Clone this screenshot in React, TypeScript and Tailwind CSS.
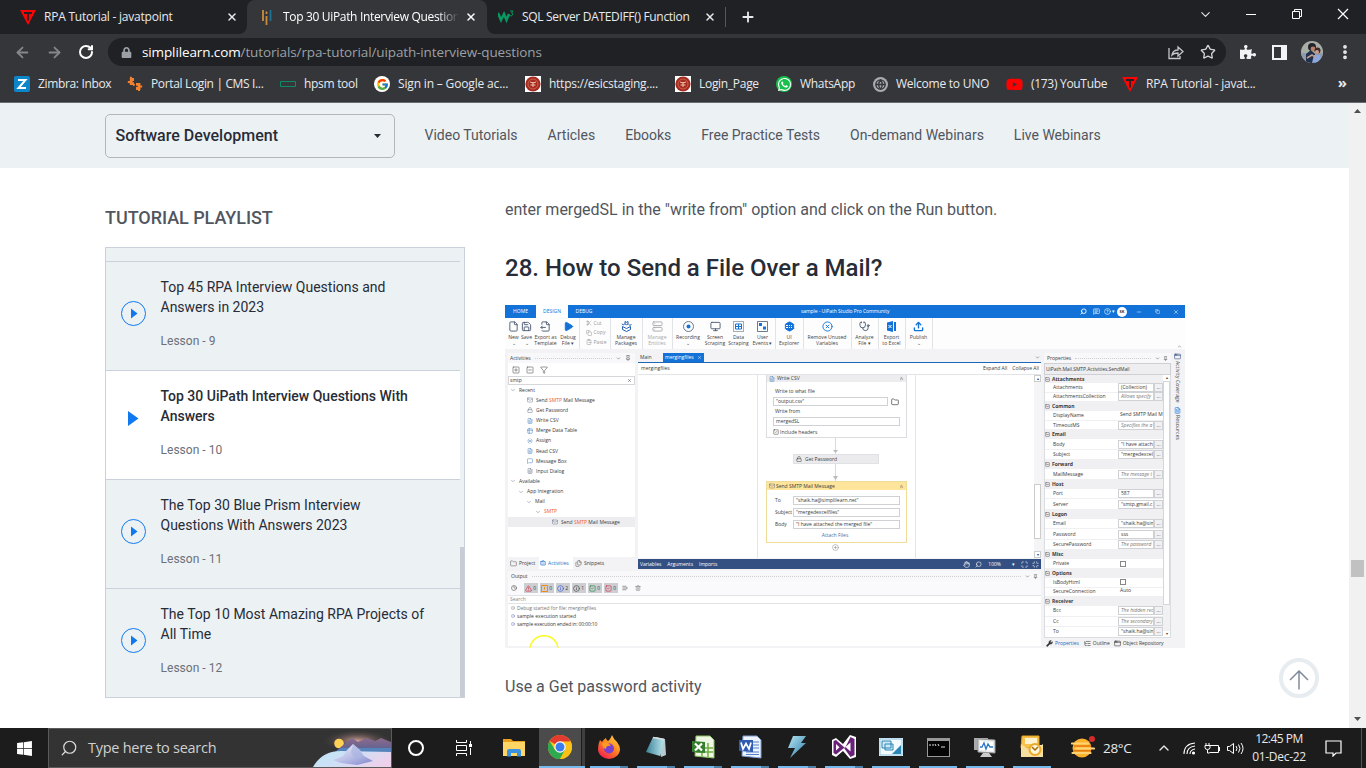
import React from "react";
import {
  ArrowLeft, ArrowRight, RotateCw, X, Plus, Star, ChevronDown, ChevronUp, ChevronsUp, Minus, MoreVertical, Search,
  File, FileOutput, FileText, Save, Play, Scissors, Copy, ClipboardPaste, Package, Server, CircleDot, Monitor, Table2,
  PanelsTopLeft, Hexagon, CircleX, Stethoscope, Upload, SquarePlus, SquareMinus, Filter, Mail, Lock, MessageSquare, Folder,
  Briefcase, Files, Clock, TriangleAlert, Info, SquareCheck, Trash2, ListX, Pin, CirclePlus, Hand, Maximize,
  Minimize, Wrench, ListTree, AppWindow, CircleHelp, MessageSquareText, Globe, Variable,
} from "lucide-react";
import { FcGoogle } from "react-icons/fc";
import { FaWhatsapp, FaPuzzlePiece, FaLock, FaYoutube, FaWindows } from "react-icons/fa";

const ui = "font-['Open_Sans','Noto_Sans',sans-serif]";
const roboto = "font-['Roboto',sans-serif]";

/* ---------- Browser ---------- */

function JtpIcon() {
  return (
    <svg className="size-4 shrink-0" viewBox="0 0 16 16">
      <path d="M0 1h16L8 16z" fill="#f80505" />
      <path d="M4 4h8M8 4v7.500" stroke="#202124" strokeWidth="1.800" fill="none" />
    </svg>
  );
}

function Emblem() {
  return (
    <svg className="size-4 shrink-0" viewBox="0 0 16 16">
      <rect width="16" height="16" fill="#fff" />
      <circle cx="8" cy="8" r="7.600" fill="#a8291e" />
      <circle cx="8" cy="8" r="5" fill="none" stroke="#c9745f" strokeWidth=".8" />
      <path d="M5 6l3 1 3-1M8 6v5M5.500 9h5" stroke="#e9c3ae" strokeWidth="1" fill="none" />
    </svg>
  );
}

function TabStrip() {
  return (
    <div className="flex h-[34px] bg-[#202124] text-[12px] text-[#e8eaed]">
      <div className="flex w-[247px] items-center pl-5">
        <JtpIcon />
        <span className="ml-2 w-[175px] whitespace-nowrap tracking-[-0.23px]">RPA Tutorial - javatpoint</span>
        <X className="ml-[7px] size-3" strokeWidth={3} />
      </div>
      <div className="relative flex w-[240px] items-center rounded-t-lg bg-[#35363a] pl-3 text-white">
        <svg className="absolute -left-2 bottom-0 size-2" viewBox="0 0 8 8"><path d="M8 0v8H0a8 8 0 0 0 8-8" fill="#35363a" /></svg>
        <svg className="absolute -right-2 bottom-0 size-2" viewBox="0 0 8 8"><path d="M0 0v8h8a8 8 0 0 1-8-8" fill="#35363a" /></svg>
        <svg className="size-4 shrink-0" viewBox="0 0 16 16" strokeWidth="1.800">
          <path d="M4 1v11M7.500 7v9M7.500 2.500v2.500" stroke="#c98d3c" /><path d="M11.500 1v11" stroke="#1f7396" />
        </svg>
        <span className="ml-2 w-[176px] whitespace-nowrap tracking-[-0.33px] [mask-image:linear-gradient(90deg,#000_155px,transparent)]">
          Top 30 UiPath Interview Question
        </span>
        <X className="ml-[6px] size-3" strokeWidth={3} />
      </div>
      <div className="flex items-center pl-[11px]">
        <svg className="size-4" viewBox="0 0 16 16" fill="none" stroke="#089960" strokeWidth="2.500">
          <path d="M0 4l3 7 3-6 2.500 6L11 5" /><path d="M12 2h3l-1.500 2q2 .5 1 2t-3 .5" strokeWidth="1" />
        </svg>
        <span className="ml-2 w-[183px] whitespace-nowrap tracking-[-0.32px]">SQL Server DATEDIFF() Function</span>
        <X className="-ml-px size-3" strokeWidth={3} />
        <span className="ml-[9px] h-5 w-px bg-[#55575b]" />
        <Plus className="ml-[14px] size-4" strokeWidth={2.700} />
      </div>
      <div className="ml-auto grid grid-cols-[repeat(4,46px)] place-items-center pb-[6px]">
        <ChevronDown className="size-[15px]" strokeWidth={1.700} />
        <span className="h-px w-[10px] bg-white" />
        <svg className="size-[12px]" viewBox="0 0 12 12" fill="none" stroke="#fff"><path d="M1.500 3.500h7v7h-7zM3.500 3.500v-2h7v7h-2" /></svg>
        <svg className="size-[12px]" viewBox="0 0 12 12" stroke="#fff" strokeWidth="1.200"><path d="M1 1l10 10M11 1L1 11" /></svg>
      </div>
    </div>
  );
}

function Avatar() {
  return (
    <svg className="size-[22px]" viewBox="0 0 22 22">
      <defs><clipPath id="av"><circle cx="11" cy="11" r="11" /></clipPath></defs>
      <g clipPath="url(#av)">
        <rect width="22" height="22" fill="#a9aea6" /><rect y="12" width="22" height="10" fill="#8f99ad" />
        <path d="M5 22V13l5-4 4 4v9z" fill="#20314b" /><circle cx="11" cy="6" r="4" fill="#24252b" /><circle cx="12" cy="8" r="2.400" fill="#b9826a" />
        <circle cx="16.500" cy="9.500" r="3" fill="#3a2b2b" /><circle cx="16" cy="11" r="2" fill="#cf9c86" /><path d="M11 22l2-8h6l2 8z" fill="#8ba8dc" />
        <path d="M6 17l5-3 4 3" stroke="#c99a86" strokeWidth="1.500" fill="none" />
      </g>
    </svg>
  );
}

function Toolbar() {
  return (
    <div className="flex h-[36px] items-center bg-[#35363a] pr-[15px] pl-[14px]">
      <ArrowLeft className="size-[17px] text-[#85878a]" strokeWidth={2.500} />
      <ArrowRight className="ml-[15px] size-[17px] text-[#85878a]" strokeWidth={2.500} />
      <RotateCw className="ml-[15px] size-4 text-white" strokeWidth={3} />
      <div className="ml-[14px] flex h-7 w-[1118px] items-center rounded-full bg-[#202124] pl-[13px]">
        <FaLock className="size-[11px] text-[#9aa0a6]" />
        <span className="ml-[10px] text-[13.500px] tracking-[-0.12px] whitespace-nowrap text-[#9aa0a6]">
          <span className="text-white">simplilearn.com</span>/tutorials/rpa-tutorial/uipath-interview-questions
        </span>
        <svg className="ml-auto size-4" viewBox="0 0 16 16" fill="none" stroke="#c4c7cb" strokeWidth="1.300">
          <path d="M1 4v10.500h11V12M4 11q1-5 6-5V3l5 4.500L10 12V9q-4 0-6 2z" />
        </svg>
        <Star className="mr-[10px] ml-[16px] size-4 text-[#d2d4d7]" />
      </div>
      <FaPuzzlePiece className="ml-[14px] size-[16px] text-[#f1f3f4]" />
      <svg className="ml-[16px] size-[15px]" viewBox="0 0 15 15"><path d="M1 1h13v13H1z" fill="none" stroke="#f1f3f4" strokeWidth="2" /><path d="M9 1h5v13H9z" fill="#f1f3f4" /></svg>
      <span className="ml-[14px]"><Avatar /></span>
      <MoreVertical className="ml-auto size-[18px] -mr-[3px] text-[#f1f3f4]" strokeWidth={3} />
    </div>
  );
}

const bookmarks = [
  { t: "Zimbra: Inbox", w: "w-[113px]", k: "tracking-[-0.35px]", i: <svg className="size-4" viewBox="0 0 16 16"><rect width="16" height="16" rx="2" fill="#0a86c9" /><path d="M4 4h7.500L4.500 12H12" stroke="#fff" strokeWidth="2" fill="none" /></svg> },
  { t: "Portal Login | CMS I...", w: "w-[153px]", k: "tracking-[-0.35px]", i: <svg className="size-4" viewBox="0 0 16 16" fill="none" stroke="#f5802d"><path d="M7 3.500H4.200v4.200H7M9 8.300h3v4.200H9" strokeWidth="2.800" /><path d="M4 .8v3M.8 6h3M12 15v-3M15.200 10.500h-3M6 8l1.500 1.500" strokeWidth="2" /></svg> },
  { t: "hpsm tool", w: "w-[94px]", k: "tracking-[-0.3px]", i: <svg className="size-4" viewBox="0 0 16 16"><path d="M.5 5.500h15v5H.5z" stroke="#0c8b64" fill="none" /></svg> },
  { t: "Sign in – Google ac...", w: "w-[151px]", k: "tracking-[-0.16px]", i: <span className="grid size-4 place-items-center rounded-full bg-white"><FcGoogle className="size-[13px]" /></span> },
  { t: "https://esicstaging....", w: "w-[150px]", k: "tracking-[-0.26px]", i: <Emblem /> },
  { t: "Login_Page", w: "w-[101px]", k: "tracking-[-0.3px]", i: <Emblem /> },
  { t: "WhatsApp", w: "w-[97px]", k: "tracking-[-0.3px]", i: <span className="grid size-4 place-items-center rounded-full bg-[#16c04a]"><FaWhatsapp className="size-[15px] text-white" /></span> },
  { t: "Welcome to UNO", w: "w-[133px]", k: "tracking-[-0.25px]", i: <span className="grid size-[15px] place-items-center rounded-full bg-[#a8abb0]"><Globe className="size-[11px] text-[#35363a]" strokeWidth={3} /></span> },
  { t: "(173) YouTube", w: "w-[116px]", k: "tracking-[-0.3px]", i: <FaYoutube className="size-[17px] text-[#f00]" /> },
  { t: "RPA Tutorial - javat...", w: "w-[150px]", k: "tracking-[-0.22px]", i: <JtpIcon /> },
];

function Bookmarks() {
  return (
    <div className="flex h-[33px] items-center border-b border-[#6a6b6e] bg-[#35363a] pb-1 pl-[14px] text-[12px] text-[#e8eaed]">
      {bookmarks.map((b) => (
        <div key={b.t} className={`flex shrink-0 items-center gap-2 whitespace-nowrap ${b.w}`}>
          {b.i}
          <span className={b.k}>{b.t}</span>
        </div>
      ))}
      <span className="mr-[19px] ml-auto pb-[3px] text-[15px] font-bold">»</span>
    </div>
  );
}

/* ---------- Site ---------- */

function SiteNav() {
  return (
    <div className="flex h-[65px] items-center bg-[#ecf1f4] pl-[105px]">
      <div className="flex h-11 w-[290px] items-center justify-between rounded-[5px] border border-[#b3b5b9] pr-[13px] pl-[9.500px] text-[16px] font-medium text-[#272c37]">
        <span>Software Development</span>
        <svg className="h-1 w-[7px]" viewBox="0 0 7 4"><path d="M0 0h7L3.500 4z" fill="#272c37" /></svg>
      </div>
      <nav className="ml-[29.500px] flex gap-[30px] text-[14px] text-[#51565e]">
        {["Video Tutorials", "Articles", "Ebooks", "Free Practice Tests", "On-demand Webinars", "Live Webinars"].map((l) => <span key={l}>{l}</span>)}
      </nav>
    </div>
  );
}

const lessons = [
  { a: "Top 45 RPA Interview Questions and", b: "Answers in 2023", n: 9 },
  { a: "Top 30 UiPath Interview Questions With", b: "Answers", n: 10, on: true },
  { a: "The Top 30 Blue Prism Interview", b: "Questions With Answers 2023", n: 11 },
  { a: "The Top 10 Most Amazing RPA Projects of", b: "All Time", n: 12 },
];

function Playlist() {
  return (
    <aside className="w-[360px]">
      <h2 className="mt-[39px] text-[18px] leading-[22px] font-medium tracking-[-0.05px] text-[#51565e]">TUTORIAL PLAYLIST</h2>
      <div className="mt-[18px] flex h-[451px] border border-[#ccd0da] bg-[#ecf1f4]">
        <div className="w-[354px] pt-[13px]">
          {lessons.map((l) => (
            <div key={l.n} className={`flex h-[109px] items-start border-t border-[#ccd0da] pl-[15px] ${l.on ? "bg-white" : ""}`}>
              <div className="mt-[39px] w-[39.500px]">
                {l.on ? (
                  <svg className="mt-[1px] ml-[7px] h-[15px] w-[11px]" viewBox="0 0 11 15"><path d="M0 0l10.500 7.500L0 15z" fill="#1179ef" /></svg>
                ) : (
                  <svg className="size-[25px]" viewBox="0 0 25 25"><circle cx="12.500" cy="12.500" r="12" fill="none" stroke="#1179ef" /><path d="M10 7.500l6.500 5-6.500 5z" fill="#1179ef" /></svg>
                )}
              </div>
              <div className={`pt-[15px] text-[14px] leading-5 whitespace-nowrap text-[#272c37] ${l.on ? "font-medium" : "font-normal"}`}>
                <p>{l.a}</p>
                <p>{l.b}</p>
                <p className="mt-[14px] text-[12px] font-normal tracking-[0.03px] text-[#6c7078]">Lesson - {l.n}</p>
              </div>
            </div>
          ))}
        </div>
        <span className="ml-auto h-[150px] w-1 self-end bg-[#c8ccd4]" />
      </div>
    </aside>
  );
}

/* ---------- Studio picture ---------- */

function Tool({ i, a, b, w, dim }: { i: React.ReactNode; a: string; b?: string; w: string; dim?: boolean }) {
  return (
    <div className={`flex shrink-0 flex-col items-center ${w} ${dim ? "text-[#aaa]" : "text-[#444]"}`}>
      <span className="mt-[2px] flex h-[13px] items-center text-[#4a5a70]">{i}</span>
      <span className="mt-[2px] leading-[5.500px] whitespace-nowrap">{a}</span>
      <span className="leading-[5.500px] whitespace-nowrap">{b}</span>
    </div>
  );
}

const ic = "size-[11px]";
const blue = "size-[11px] text-[#1272d8]";
const rule = "border-r border-[#e2e3e6]";

function Ribbon() {
  return (
    <div className="flex h-[31px] bg-[#fdfdfe] pl-[2.500px] text-[5.100px]">
      <Tool w="w-3" i={<File className={ic} />} a="New" b="⌄" />
      <Tool w="w-[14px]" i={<Save className={ic} />} a="Save" b="⌄" />
      <Tool w="w-6" i={<FileOutput className={ic} />} a="Export as" b="Template" />
      <Tool w={`w-[22px] ${rule}`} i={<Play className={blue} fill="#1272d8" />} a="Debug" b="File ▾" />
      <div className={`flex w-[31px] flex-col pl-[6px] text-[#999] ${rule}`}>
        {([[Scissors, "Cut"], [Copy, "Copy"], [ClipboardPaste, "Paste"]] as const).map(([I, t]) => (
          <span key={t} className="flex h-[9.600px] items-center gap-[2px] pt-px"><I className="size-[6px]" />{t}</span>
        ))}
      </div>
      <Tool
        w={`w-8 ${rule}`}
        i={<svg className="size-[11px]" viewBox="0 0 11 11" fill="none" stroke="#1f5fae"><path d="M1.500 5.500l4 2 4-2v3l-4 2-4-2z" /><path d="M4 .5l1.500.8L7 .5V3L5.500 3.800 4 3zM.8 3l1.500.8 1.500-.8M7.500 3.500l1.500.8 1.500-.8" /></svg>}
        a="Manage" b="Packages"
      />
      <Tool dim w={`w-[30px] ${rule}`} i={<Server className="size-[11px] text-[#a5a8ad]" />} a="Manage" b="Entities" />
      <Tool w="w-[31px]" i={<svg className="size-[11px]" viewBox="0 0 11 11"><circle cx="5.500" cy="5.500" r="5" fill="none" stroke="#4a5a70" strokeWidth=".8" /><circle cx="5.500" cy="5.500" r="2" fill="#1272d8" /></svg>} a="Recording" b="⌄" />
      <Tool w="w-[23px]" i={<Monitor className={ic} />} a="Screen" b="Scraping" />
      <Tool
        w="w-6"
        i={<svg className="size-[11px]" viewBox="0 0 11 11" fill="none"><path d="M.5.500h10v10H.5z" stroke="#4a5a70" strokeDasharray="1 1" /><path d="M2.500 3h6v5h-6zM2.500 5.500h6M5.500 3v5" stroke="#1272d8" /></svg>}
        a="Data" b="Scraping"
      />
      <Tool
        w={`w-[25px] ${rule}`}
        i={<svg className="size-[11px]" viewBox="0 0 11 11"><path d="M.5.500h10v10H.5z" stroke="#4a5a70" fill="none" strokeWidth=".8" /><path d="M2 2h3v3H2zM6 5.500h3v3H6z" fill="#1272d8" /></svg>}
        a="User" b="Events ▾"
      />
      <Tool
        w={`w-[28px] ${rule}`}
        i={<span className="relative grid size-[11px] place-items-center"><Hexagon className={blue} fill="#1272d8" /><span className="absolute h-[3px] w-[6px] border-y border-dotted border-white" /></span>}
        a="UI" b="Explorer"
      />
      <Tool w={`w-[48px] ${rule}`} i={<CircleX className={blue} />} a="Remove Unused" b="Variables" />
      <Tool w={`w-[27px] ${rule}`} i={<Stethoscope className={ic} />} a="Analyze" b="File ▾" />
      <Tool w={`w-[27px] ${rule}`} i={<svg className="size-[11px]" viewBox="0 0 11 11"><path d="M1 1.500L7 0v11L1 9.500zM8 1h2v9H8z" fill="#1272d8" /><path d="M2.500 4l3 3m0-3l-3 3" stroke="#fff" /></svg>} a="Export" b="to Excel" />
      <Tool w={`w-[27px] ${rule}`} i={<Upload className={blue} strokeWidth={3} />} a="Publish" b="⌄" />
      <ChevronUp className="mt-auto mr-[3px] ml-auto size-[5px] text-[#444]" />
    </div>
  );
}

const Smtp = () => <span className="text-[#f0592b]">SMTP</span>;
const gi = "size-[6px] shrink-0 text-[#6a7688]";
const bi = "size-[6px] shrink-0 text-[#4a80bc]";
const tree: { p: string; i: React.ReactNode; t: React.ReactNode; sel?: boolean }[] = [
  { p: "pl-[2px]", i: <ChevronDown className={gi} />, t: "Recent" },
  { p: "pl-[19px]", i: <Mail className={gi} />, t: <>Send <Smtp /> Mail Message</> },
  { p: "pl-[19px]", i: <Lock className={gi} />, t: "Get Password" },
  { p: "pl-[19px]", i: <FileText className={bi} />, t: "Write CSV" },
  { p: "pl-[19px]", i: <Table2 className={bi} />, t: "Merge Data Table" },
  { p: "pl-[19px]", i: <Variable className={bi} />, t: "Assign" },
  { p: "pl-[19px]", i: <FileText className={bi} />, t: "Read CSV" },
  { p: "pl-[19px]", i: <MessageSquare className={bi} />, t: "Message Box" },
  { p: "pl-[19px]", i: <FileText className={gi} />, t: "Input Dialog" },
  { p: "pl-[2px]", i: <ChevronDown className={gi} />, t: "Available" },
  { p: "pl-[10px]", i: <ChevronDown className={gi} />, t: "App Integration" },
  { p: "pl-[18px]", i: <ChevronDown className={gi} />, t: "Mail" },
  { p: "pl-[27px]", i: <ChevronDown className={gi} />, t: <Smtp /> },
  { p: "pl-[44px]", i: <Mail className={gi} />, t: <>Send <Smtp /> Mail Message</>, sel: true },
];

const dots = "mx-1 h-px grow border-t border-dotted border-[#cfd0d4]";

function Activities() {
  return (
    <div className="flex h-[216px] w-[127px] flex-col">
      <div className="flex h-[10px] items-center bg-[#f8f8fa] pr-1 pl-[2px]">Activities<span className={dots} /><ChevronDown className="size-[5px]" /><Pin className="ml-1 size-[6px]" /></div>
      <div className="flex h-[13px] items-center gap-[6px] bg-white pl-[4px] text-[#666]"><SquarePlus className="size-2" /><SquareMinus className="size-2" /><Filter className="size-2" /></div>
      <div className="flex h-[9px] items-center justify-between border border-[#d5d7db] bg-white pr-[2px] pl-px">smtp<X className="size-[5px]" /></div>
      <div className="grow bg-white">
        {tree.map((r, k) => (
          <div key={k} className={`flex h-[10.170px] items-center gap-[3px] whitespace-nowrap ${r.p} ${r.sel ? "bg-[#ededf0]" : ""}`}>{r.i}<span>{r.t}</span></div>
        ))}
      </div>
      <div className="flex h-[12px] items-center bg-[#f3f3f5] pl-[2px]">
        <Folder className="size-[7px] text-[#666]" /><span className="ml-[2px] w-[20px]">Project</span>
        <span className="flex h-full w-[34px] items-center bg-white pl-[1px] text-[#1b6cc4]"><Briefcase className="mr-[2px] size-[6px]" />Activities</span>
        <Files className="ml-[2px] size-[7px] text-[#666]" /><span className="ml-[2px]">Snippets</span>
      </div>
    </div>
  );
}

const field = "flex items-center border border-[#cfd1d5] bg-white pl-[2px]";

function Designer() {
  return (
    <div className="flex h-[216px] w-[403px] flex-col">
      <div className="flex h-[10px] items-center border-b border-[#1d66b8] pl-[2px]">
        <span className="w-[23px]">Main</span>
        <span className="flex h-[9px] w-[41px] items-center justify-between bg-[#1272d8] px-[2px] text-white">mergingfiles<X className="size-[5px]" /></span>
        <ChevronDown className="mr-[1px] ml-auto size-[5px]" />
      </div>
      <div className="flex h-[12px] items-center border-b border-[#e3e4e7] bg-white pr-[2px] pl-[3px]">mergingfiles<span className="ml-auto">Expand All</span><span className="ml-[5px]">Collapse All</span></div>
      <div className="relative h-[183px] overflow-hidden bg-white">
        <div className="absolute inset-y-0 left-[119px] w-[159px] border-x border-[#e4e5e8]" />
        <div className="absolute top-[60px] left-[197px] h-[46px] w-px bg-[#d8dade]" />
        <div className="absolute top-[-1px] left-[128px] h-[64px] w-[141px] border border-[#dcdde1] bg-white">
          <div className="flex h-[7px] items-center bg-[#ededf0] px-[2px]"><FileText className={bi} /><span className="ml-[2px]">Write CSV</span><ChevronsUp className="ml-auto size-[5px]" /></div>
          <p className="mt-[6px] pl-2 leading-[7px]">Write to what file</p>
          <div className="mt-[2px] ml-[6px] flex items-center gap-[3px]"><span className={`${field} h-[9px] w-[115px]`}>"output.csv"</span><Folder className="size-[8px]" /></div>
          <p className="mt-[2px] pl-2 leading-[7px]">Write from</p>
          <div className={`${field} mt-[2px] ml-[6px] h-[9px] w-[127px]`}>mergedSL</div>
          <p className="mt-[3px] flex items-center pl-[6px] leading-[5px]"><SquareCheck className="mr-[1px] size-[6px]" />Include headers</p>
        </div>
        <div className="absolute top-[79px] left-[155px] flex h-[10px] w-[86px] items-center border border-[#e0e1e4] bg-[#ebebee] pl-[2px]"><Lock className="mr-[3px] size-[6px]" />Get Password</div>
        <svg className="absolute top-[74px] left-[195px] h-[32px] w-[5px]" viewBox="0 0 5 32"><path d="M0 1h5L2.500 4zM0 27h5l-2.500 4z" fill="#b8babf" /></svg>
        <div className="absolute top-[106px] left-[128px] h-[62px] w-[141px] border border-[#efdc97] bg-white">
          <div className="flex h-[8px] items-center bg-[#ffe49b] px-[2px]"><Mail className={gi} /><span className="ml-[1px]">Send SMTP Mail Message</span><ChevronsUp className="ml-auto size-[5px]" /></div>
          {[["To", "\"shaik.ha@simplilearn.net\"", "mt-[5px]"], ["Subject", "\"mergedexcelfiles\"", "mt-[2px]"], ["Body", "\"I have attached the merged file\"", "mt-[2px]"]].map(([a, b, m]) => (
            <div key={a} className={`flex h-[10px] items-center ${m}`}><span className="w-[26px] pl-[8px]">{a}</span><span className={`${field} h-[9px] w-[107px]`}>{b}</span></div>
          ))}
          <p className="mt-[3px] pr-[3px] text-center leading-[6px] text-[#4a6fa5]">Attach Files</p>
        </div>
        <CirclePlus className="absolute top-[169px] left-[194px] size-[7px] text-[#777]" strokeWidth={1.500} />
        <div className="absolute inset-y-0 right-0 flex w-[7px] flex-col bg-[#f5f5f7]">
          <span className="h-[7px] border border-[#ccc] bg-white text-center text-[4px] leading-[5px]">▴</span>
          <span className="mt-[102px] h-[55px] border border-[#ccc] bg-white" />
          <span className="mt-auto h-[7px] border border-[#ccc] bg-white text-center text-[4px] leading-[5px]">▾</span>
        </div>
      </div>
      <div className="mt-auto flex h-[10px] items-center gap-[6px] bg-[#345083] pr-[2px] pl-[2px] text-white">
        <span>Variables</span><span>Arguments</span><span>Imports</span>
        <Hand className="ml-auto size-[7px]" /><Search className="-ml-[1px] size-[7px] -scale-x-100" /><span>100%</span><span className="ml-[5px]">▾</span><Maximize className="size-[7px]" /><Minimize className="-ml-[2px] size-[7px]" />
      </div>
    </div>
  );
}

function Output() {
  const badge = "flex h-[10px] w-[13.500px] items-center justify-center gap-[1px] bg-[#cdced2] mr-[2.500px]";
  const line = "flex h-[8px] items-center gap-[2px] pl-[3px]";
  return (
    <div className="mt-[2px] flex h-[75px] w-[533px] flex-col bg-white">
      <div className="flex h-[10px] items-center bg-[#f8f8fa] pr-[3px] pl-[3px]">Output<span className={dots} /><ChevronDown className="size-[5px]" /><Pin className="ml-[3px] size-[5px]" /></div>
      <div className="flex h-[14px] items-center bg-[#fafafc] pl-[3px]">
        <Clock className="mr-[7px] size-[6px]" />
        <span className={badge}><TriangleAlert className="size-[7px] text-[#d8203c]" />0</span>
        <span className={badge}><svg className="size-[7px]" viewBox="0 0 7 7" fill="none" stroke="#ee8a1d"><path d="M.5.500h6v6h-6zM3.500 2v2.500" /></svg>0</span>
        <span className={badge}><Info className="size-[7px] text-[#2a50d0]" />2</span>
        <span className={badge}><Info className="size-[7px]" />1</span>
        <span className={badge}><SquareCheck className="size-[7px] text-[#188038]" />0</span>
        <span className={badge}><SquareCheck className="size-[7px] text-[#d8203c]" />0</span>
        <ListX className="ml-[2px] size-[6px]" /><Trash2 className="ml-[7px] size-[6px] text-[#777]" />
      </div>
      <div className="flex h-[9px] items-center border-y border-[#e2e3e6] pl-[2px] text-[#888]">Search</div>
      <div className={`${line} tracking-[-0.05px] text-[#777]`}><CircleDot className="size-[4px]" />Debug started for file: mergingfiles</div>
      <div className={line}><CircleDot className="size-[4px] text-[#5465b5]" />sample execution started</div>
      <div className={`${line} tracking-[-0.14px]`}><CircleDot className="size-[4px] text-[#5465b5]" />sample execution ended in: 00:00:10</div>
    </div>
  );
}

const H = "h-[9px]";
const N = "h-[9.600px]";
const M = "h-[10.500px]";
const props: { t: string; v?: string; k?: "h" | "i" | "c" | "p"; h: string }[] = [
  { t: "Attachments", k: "h", h: "h-[8px]" }, { t: "Attachments", v: "(Collection)", h: N }, { t: "AttachmentsCollection", v: "Allows specify", k: "i", h: N },
  { t: "Common", k: "h", h: H }, { t: "DisplayName", v: "Send SMTP Mail M", k: "p", h: N }, { t: "TimeoutMS", v: "Specifies the a", k: "i", h: N },
  { t: "Email", k: "h", h: H }, { t: "Body", v: "\"I have attach", h: M }, { t: "Subject", v: "\"mergedexcel", h: M },
  { t: "Forward", k: "h", h: H }, { t: "MailMessage", v: "The message t", k: "i", h: M },
  { t: "Host", k: "h", h: H }, { t: "Port", v: "587", h: M }, { t: "Server", v: "\"smtp.gmail.c", h: M },
  { t: "Logon", k: "h", h: H }, { t: "Email", v: "\"shaik.ha@sim", h: M }, { t: "Password", v: "sss", h: M }, { t: "SecurePassword", v: "The password", k: "i", h: M },
  { t: "Misc", k: "h", h: H }, { t: "Private", k: "c", h: N },
  { t: "Options", k: "h", h: H }, { t: "IsBodyHtml", k: "c", h: N }, { t: "SecureConnection", v: "Auto", k: "p", h: N },
  { t: "Receiver", k: "h", h: H }, { t: "Bcc", v: "The hidden rec", k: "i", h: M }, { t: "Cc", v: "The secondary", k: "i", h: M }, { t: "To", v: "\"shaik.ha@sim", h: M },
];

function Properties() {
  return (
    <div className="ml-[3px] flex h-[295px] w-[127px] flex-col">
      <div className="flex h-[10px] items-center bg-[#f8f8fa] pr-[3px] pl-[3px]">Properties<span className={dots} /><ChevronDown className="size-[5px]" /><Pin className="ml-[3px] size-[5px]" /></div>
      <div className="flex h-[12px] items-center border border-[#cfd0d4] bg-[#eeeef1] pl-px tracking-[-0.060px]">UiPath.Mail.SMTP.Activities.SendMail</div>
      <div className="flex h-[263px] overflow-hidden border border-t-0 border-[#dcdde0] bg-white">
        <div className="w-[119px]">
          {props.map((r, k) =>
            r.k === "h" ? (
              <div key={k} className={`flex items-center gap-[2px] bg-[#f0f0f3] font-bold ${r.h}`}><SquareMinus className="size-[5px]" />{r.t}</div>
            ) : (
              <div key={k} className={`flex items-center border-b border-[#f0f0f2] pl-[8px] whitespace-nowrap ${r.h}`}>
                <span className="w-[65px]">{r.t}</span>
                {r.k === "c" ? (
                  <span className="ml-[2px] size-[6px] border border-[#888]" />
                ) : (
                  <span className={`h-[9px] overflow-hidden pl-[2px] leading-[7px] ${r.k === "p" ? "w-[45px]" : "w-[36px] border border-[#cfd1d5]"} ${r.k === "i" ? "text-[#777] italic" : ""}`}>{r.v}</span>
                )}
                {r.k !== "c" && r.k !== "p" && <span className="h-[9px] w-[9px] border border-[#cfd1d5] bg-[#f1f1f3] text-center leading-[6px]">...</span>}
              </div>
            )
          )}
        </div>
        <div className="flex w-[7px] flex-col bg-[#f1f1f4]">
          <span className="h-[6px] bg-white text-center text-[4px] leading-[6px]">▴</span>
          <span className="h-[224px] border border-[#d5d6da] bg-white" />
          <span className="mt-auto h-[6px] bg-white text-center text-[4px] leading-[6px]">▾</span>
        </div>
      </div>
      <div className="flex grow items-center pl-[2px] tracking-[-0.04px] whitespace-nowrap">
        <Wrench className="size-[7px]" fill="#333" /><span className="ml-[2px] text-[#1b6cc4]">Properties</span>
        <ListTree className="ml-[5px] size-[7px]" /><span className="ml-[2px]">Outline</span>
        <AppWindow className="ml-[4px] size-[7px]" /><span className="ml-[2px]">Object Repository</span>
      </div>
    </div>
  );
}

function Studio() {
  return (
    <div className={`${ui} relative h-[343px] w-[680px] overflow-hidden bg-[#f3f3f5] text-[5px] leading-none text-[#3a3a3a]`}>
      <div className="flex h-[13px] items-center bg-[#1272d8] text-white">
        <span className="w-[31px] text-center">HOME</span>
        <span className="flex h-full w-[32px] items-center justify-center bg-white text-[#1272d8]">DESIGN</span>
        <span className="w-[32px] text-center">DEBUG</span>
        <span className="ml-[201px] w-[98px] tracking-[-0.06px] whitespace-nowrap">sample - UiPath Studio Pro Community</span>
        <span className="ml-auto flex items-center pr-[6px]">
          <Search className="size-[7px] -scale-x-100" strokeWidth={3} /><MessageSquareText className="ml-[6px] size-[7px]" /><CircleHelp className="ml-[4px] size-[7px]" /><span className="ml-px">▾</span>
          <span className="ml-[2px] grid size-[10px] place-items-center rounded-full bg-white text-[4px] font-bold text-[#333]">SK</span>
          <Minus className="ml-[9px] size-[6px]" /><Copy className="ml-[13px] size-[5px]" /><X className="ml-[13px] size-[6px]" />
        </span>
      </div>
      <Ribbon />
      <div className="flex pt-[4px] pl-[3px]">
        <div>
          <div className="flex gap-[3px]"><Activities /><Designer /></div>
          <Output />
        </div>
        <Properties />
        <div className="ml-[3px] flex flex-col items-center tracking-[0.12px]">
          <AppWindow className="size-[7px] text-[#345083]" />
          <span className="mt-px h-[44px] whitespace-nowrap [writing-mode:vertical-rl]">Activity Coverage</span>
          <FileText className="mt-[2px] size-[7px] text-[#1272d8]" />
          <span className="mt-px whitespace-nowrap [writing-mode:vertical-rl]">Resources</span>
        </div>
      </div>
      <svg className="absolute bottom-0 left-[24px] h-[13px] w-[31px]" viewBox="0 0 31 13"><circle cx="15" cy="15" r="14.300" fill="none" stroke="#fafa28" strokeWidth="1.500" /></svg>
    </div>
  );
}

function Page() {
  return (
    <div className={`${roboto} flex h-[625px]`}>
      <main className="relative w-[1349px] overflow-hidden bg-white">
        <SiteNav />
        <div className="flex gap-10 pl-[105px]">
          <Playlist />
          <article className="text-[16px] text-[#51565e]">
            <p className="mt-[30px] leading-6 tracking-[-0.01px]">enter mergedSL in the "write from" option and click on the Run button.</p>
            <h1 className="mt-[30px] mb-[21px] text-[24px] leading-8 font-medium text-[#272c37]">28. How to Send a File Over a Mail?</h1>
            <Studio />
            <p className="mt-[27px] leading-6">Use a Get password activity</p>
          </article>
        </div>
        <div className="absolute right-[30px] bottom-[30px] grid size-10 place-items-center rounded-full border-4 border-[#e6ecf0] bg-white">
          <svg className="mt-[3px] h-[20px] w-[20px]" viewBox="0 0 20 20" fill="none" stroke="#808a9e" strokeWidth="1.500"><path d="M10 19.500V1M1 10l9-9 9 9" /></svg>
        </div>
      </main>
      <div className="flex w-[17px] flex-col items-center bg-[#f1f1f1]">
        <svg className="mt-[6px] h-1 w-[7px]" viewBox="0 0 7 4"><path d="M0 4h7L3.500 0z" fill="#505050" /></svg>
        <span className="mt-[447px] h-[17px] w-[13px] bg-[#c1c1c1]" />
        <svg className="mt-auto mb-[7px] h-1 w-[7px]" viewBox="0 0 7 4"><path d="M0 0h7L3.500 4z" fill="#505050" /></svg>
      </div>
    </div>
  );
}

/* ---------- Taskbar ---------- */

function Scenery() {
  return (
    <svg className="ml-auto h-[38px] w-[78px]" viewBox="0 0 78 38">
      <defs>
        <linearGradient id="ice" x1="0" x2="1" y1=".2" y2=".6"><stop offset="0" stopColor="#bfe4f5" /><stop offset=".45" stopColor="#cfe0f6" /><stop offset="1" stopColor="#eed0ea" /></linearGradient>
        <radialGradient id="glow"><stop offset="0" stopColor="#d8a49c" /><stop offset="1" stopColor="#333" stopOpacity="0" /></radialGradient>
        <linearGradient id="berg" x1="0" y1="0" x2=".8" y2="1"><stop offset="0" stopColor="#f6f4ff" /><stop offset=".6" stopColor="#b9bfe6" /><stop offset="1" stopColor="#8a8fd2" /></linearGradient>
        <linearGradient id="hill" y2="1" x2="0"><stop stopColor="#8d6a8e" /><stop offset="1" stopColor="#57608f" /></linearGradient>
      </defs>
      <ellipse cx="44" cy="12" rx="36" ry="12" fill="url(#glow)" />
      <circle cx="26" cy="14.500" r="4.800" fill="#ffd257" />
      <path d="M22 23l7-6 10-8 6 4 9-4 8 3 6-3 10 4v10z" fill="url(#hill)" />
      <path d="M28 19h50v8H16z" fill="#5584bd" />
      <path d="M0 38Q9 22 28 22l50 1v15z" fill="url(#ice)" />
      <path d="M20 31l10-4 4-6 6-6 7 6 4 6 9 5-16 4-16-2z" fill="url(#berg)" />
      <path d="M40 15l-2 9 4 5 6-3-1-5z" fill="#a9b0de" opacity=".6" />
    </svg>
  );
}

const task: { i: React.ReactNode; bar: "split" | "solid" }[] = [
  { bar: "split", i: <svg className="size-6" viewBox="0 0 24 24"><defs><linearGradient id="ff" x1="1" x2=".3" y2="1"><stop stopColor="#ffe14a" /><stop offset=".5" stopColor="#ff8a1f" /><stop offset="1" stopColor="#f5244b" /></linearGradient></defs><path d="M3 5q1 1 2 2 2-3 4-4 0 2 2 3 2-1 4-6 2 5 5 7 3 4 3 7a11 10 0 0 1-22 0Q1 9 3 5" fill="url(#ff)" /><circle cx="12" cy="13.500" r="5" fill="#7b3fd0" /><path d="M5 8q6-2 9 3-5-1-5 3-4-1-4-6" fill="#ff9a24" /></svg> },
  { bar: "split", i: <svg className="size-6" viewBox="0 0 24 24"><defs><linearGradient id="np"><stop stopColor="#3d8298" /><stop offset="1" stopColor="#b9e6ee" /></linearGradient></defs><path d="M12 2l9 2 1 16-5 2z" fill="#b8cbd0" /><path d="M9 2l11 2-4 17L2 17z" fill="url(#np)" /><path d="M9 2.500l11 2" stroke="#ddd" strokeWidth="1.500" /></svg> },
  { bar: "split", i: <svg className="size-6" viewBox="0 0 24 24"><path d="M5 1h14l4 4v18L4 21z" fill="#edf7e4" stroke="#8cc25e" /><path d="M5 13h17M5 17h17M11 11v10M17 8v14" stroke="#6fae3f" strokeWidth="1.500" /><path d="M1 6l13 1v11L1 17z" fill="#34802f" /><path d="M4 8.500l7 7m0-7l-7 7" stroke="#fff" strokeWidth="2.200" /></svg> },
  { bar: "split", i: <svg className="size-6" viewBox="0 0 24 24"><path d="M5 1h14l4 4v18L4 21z" fill="#eef4fd" stroke="#7e9fd3" /><path d="M14 7h7M15 10h6M15 13h6M8 17h13M8 19.500h13" stroke="#5580c8" /><path d="M1 5h14v12L1 16z" fill="#2f5cb0" /><path d="M3 7.500l2 6.500 3-5.500L11 14l2-6.500" stroke="#fff" strokeWidth="1.700" fill="none" /></svg> },
  { bar: "split", i: <svg className="size-6" viewBox="0 0 24 24"><defs><linearGradient id="bo" y2="1"><stop stopColor="#b6e5f5" /><stop offset="1" stopColor="#2c7ca5" /></linearGradient></defs><path d="M8 1h13l-5 7h5L5 23l5-10H3z" fill="url(#bo)" /></svg> },
  { bar: "split", i: <svg className="size-6" viewBox="0 0 24 24"><path d="M0 5l4-2 7 6 7-9 6 2v20l-6 2-7-8-7 6-4-2z" fill="#fff" /><path d="M1.500 6L4 5l9 8 5.500-11L22.500 4v16L18.500 22 12 13 4 19.500 1.500 18z" fill="#69217a" /><path d="M4 9v6.500l3.500-3.200zM18.500 7.500v9l-5-4.500z" fill="#fff" /></svg> },
  { bar: "solid", i: <svg className="h-[18px] w-6" viewBox="0 0 24 18"><rect width="24" height="18" fill="#f4fbff" /><rect x="1" y="1" width="22" height="16" fill="none" stroke="#8cc4e0" /><path d="M3 3h9v7H3zM6 6h8v6H6z" fill="#cfe9f6" stroke="#2a86b5" /><path d="M22 7v9h-9z" fill="#2a86b5" /></svg> },
  { bar: "solid", i: <svg className="h-[19px] w-[23px]" viewBox="0 0 23 19"><rect width="23" height="19" fill="#999" /><rect x="1" y="3" width="21" height="15" fill="#050505" /><path d="M3 6v2m3-2v2m2-2l1 2m2-2l1 2m2 1h4" stroke="#ddd" /></svg> },
  { bar: "solid", i: <svg className="size-6" viewBox="0 0 24 24"><path d="M1 3h14v12H1z" fill="#aaa" /><path d="M5 4l17 1v13l-17-1z" fill="#e8eaec" stroke="#999" /><path d="M7 6l13 1v9L7 15z" fill="#fff" /><path d="M7 12h2l2-4 2 6 2-5 2 3h3" stroke="#2c76c5" fill="none" strokeWidth="1.300" /><path d="M10 18h6l3 4H7z" fill="#ccc" /></svg> },
  { bar: "solid", i: <svg className="size-6" viewBox="0 0 24 24"><path d="M1 10h22v12H1z" fill="#f3f3f3" /><path d="M2 1h17v12H1z" fill="#f9c24c" stroke="#e5a11c" /><path d="M5 3h12v6H5z" fill="#fff3cf" /><path d="M1 9l11 8 11-8v13H1z" fill="#f7dfa0" /><circle cx="15" cy="14.500" r="5.500" fill="#fff6d8" stroke="#eba92a" strokeWidth="2" /><path d="M12 12l3 3 3-3" stroke="#a66a0a" fill="none" strokeWidth="1.500" /></svg> },
];

function Taskbar() {
  return (
    <div className="flex h-10 bg-[#1c1c1c] text-[#e8e8e8]">
      <div className="grid w-12 place-items-center"><FaWindows className="size-[17px] text-white" /></div>
      <div className="flex w-[344px] items-center border border-[#5a5a5a] bg-[#333] pl-[11px]">
        <Search className="size-[18px] -scale-x-100 text-[#ddd]" strokeWidth={1.600} />
        <span className="ml-[10px] text-[14.500px] tracking-[-0.27px] whitespace-nowrap text-[#d0d0d0]">Type here to search</span>
        <Scenery />
      </div>
      <div className="grid w-12 place-items-center"><span className="size-4 rounded-full border-[2.500px] border-white" /></div>
      <div className="grid w-[47px] place-items-center">
        <svg className="size-4" viewBox="0 0 16 16" fill="none" stroke="#fff"><path d="M.5 0v2.500h10V0M.5 16v-2.500h10V16M.5 5.500h10v5H.5zM14.500 1v3m0 4v7" /><path d="M13 4h3v3h-3z" fill="#fff" stroke="none" /></svg>
      </div>
      <div className="ml-[3px] grid w-[49px] place-items-center pr-[2px]">
        <svg className="h-[20px] w-[22px]" viewBox="0 0 22 20"><path d="M0 1h8l2 2h12v15H0z" fill="#e9a01c" /><path d="M0 4h22v14H0z" fill="#ffd566" /><path d="M4 18.500V13q0-2 2-2h10q2 0 2 2v5.500h-4V15H8v3.500z" fill="#3a93e0" /></svg>
      </div>
      <div className="flex w-[46px] border-b-2 border-[#76b9ed]">
        <div className="grid w-[42px] place-items-center bg-[#4b4b4b]">
          <svg className="size-6" viewBox="0 0 24 24"><circle cx="12" cy="12" r="12" fill="#fbc116" /><path d="M12 12L1.600 6A12 12 0 0 1 22.400 6z" fill="#e33b2e" /><path d="M1.600 6A12 12 0 0 0 12 24l5-9-10 0z" fill="#2da94f" /><path d="M12 6.500h10.700A12 12 0 0 1 12 24l5-9z" fill="#fbc116" /><circle cx="12" cy="12" r="5.700" fill="#fff" /><circle cx="12" cy="12" r="4.500" fill="#3b7ded" /></svg>
        </div>
        <div className="ml-px w-[3px] bg-[#3e3e3e]" />
      </div>
      <div className="flex gap-[9px] pl-[5px]">
        {task.map((t, k) => (
          <div key={k} className="flex w-[38px] flex-col items-center">
            <span className="flex h-[38px] items-center">{t.i}</span>
            <span className="flex h-[2px] w-full bg-[#76b9ed]">{t.bar === "split" && <span className="ml-auto w-2 bg-[#4f81a8]" />}</span>
          </div>
        ))}
      </div>
      <div className="ml-[20px] flex items-center">
        <svg className="size-6" viewBox="0 0 24 24"><circle cx="11" cy="12" r="9.500" fill="#fdb22b" /><path d="M1 7.500h16M5 12.500h18M1.500 17h18" stroke="#ffd476" strokeWidth="2.200" strokeLinecap="round" /><path d="M3 10h17M2 14.800h18" stroke="#e47a12" strokeWidth="1.500" /><circle cx="21" cy="3" r="3" fill="#d42b2b" /></svg>
        <span className="ml-2 w-[53px] text-[13.500px] tracking-[-0.3px]">28°C</span>
        <ChevronUp className="size-4" strokeWidth={2} />
        <svg className="ml-[11px] size-[13px]" viewBox="0 0 13 13" fill="none" stroke="#fff" strokeWidth="1.100"><path d="M1 12Q1 2 12 1M4 12q0-7 8-8M7 12q0-4 5-5" /><circle cx="10.500" cy="11" r="1" fill="#fff" /></svg>
        <svg className="ml-[8px] h-[12px] w-[16px]" viewBox="0 0 16 12" fill="none" stroke="#fff"><path d="M5.500 3.500h9v7h-9M1 3.500h5v2q0 2-2.500 2T1 5.500zM2 1v2m3-2v2M3.500 8v3h2M15.500 5v4" /></svg>
        <svg className="ml-[7px] h-[13px] w-[17px]" viewBox="0 0 17 13" fill="none" stroke="#fff"><path d="M.5 4.500h2l4-3v10l-4-3h-2zM9 4q2 2.500 0 5M11.500 2.500q3 4 0 8M14 1q4 5.500 0 11" /></svg>
      </div>
      <div className="ml-[7px] flex w-[56px] flex-col items-center pt-[2px] text-[12px] leading-[18px] tracking-[-0.5px] whitespace-nowrap"><span>12:45 PM</span><span className="tracking-[-0.3px]">01-Dec-22</span></div>
      <svg className="mt-3 ml-[18px] size-[17px]" viewBox="0 0 17 17" fill="none" stroke="#fff" strokeWidth="1.200"><path d="M1 1h15v12h-5l-3 3v-3H1z" /></svg>
      <span className="mr-1 ml-auto w-px bg-[#555]" />
    </div>
  );
}

export default function App() {
  return (
    <div className={`${ui} h-[768px] w-[1366px] overflow-hidden`}>
      <TabStrip />
      <Toolbar />
      <Bookmarks />
      <Page />
      <Taskbar />
    </div>
  );
}
